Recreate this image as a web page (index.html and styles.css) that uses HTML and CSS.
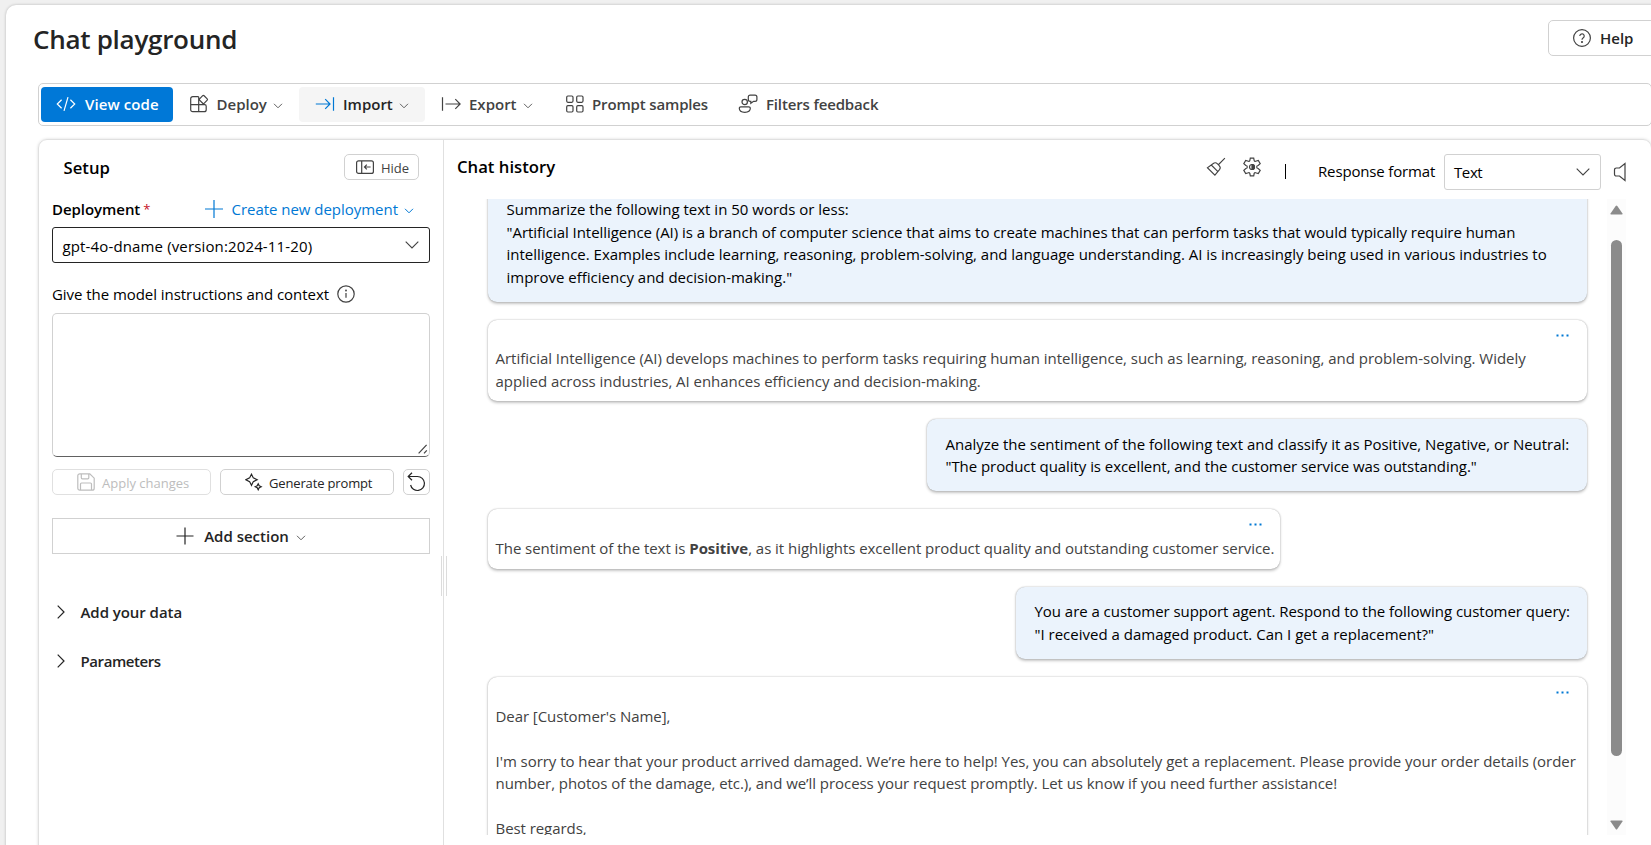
FILE: index.html
```
<!DOCTYPE html>
<html lang="en">
<head>
<meta charset="utf-8">
<title>Chat playground</title>
<link rel="stylesheet" href="styles.css">
</head>
<body>
<main class="shell">
  <header class="topbar">
    <h1 class="title"><span>Chat playground</span></h1>
    <button class="help">
      <svg class="ic" width="20" height="20" viewBox="0 0 20 20"><circle cx="10" cy="10" r="8.400"/><path d="M7.800 8a2.200 2.200 0 1 1 3.500 1.800c-.8.6-1.300 1-1.300 2"/><circle cx="10" cy="14" r=".5"/></svg>
      <span>Help</span>
    </button>
  </header>

  <nav class="toolbar">
    <button class="tool tool-primary">
      <svg class="ic" width="20" height="20" viewBox="0 0 20 20"><path d="M5.600 5.800L1.300 10l4.300 4.200M14.400 5.800l4.300 4.200-4.300 4.200M12 3.200L8 16.800"/></svg>
      <span>View code</span>
    </button>
    <button class="tool tool-deploy">
      <svg class="ic" width="20" height="20" viewBox="0 0 20 20"><path d="M9.700 2.700H3.700a2 2 0 0 0-2 2v11a2 2 0 0 0 2 2h11.500a2 2 0 0 0 2-2v-3.500a1.500 1.500 0 0 0-1.500-1.500H1.700M9.700 2.700v15M13.700 1.700a1 1 0 0 1 1.400 0l3.100 3.100a1 1 0 0 1 0 1.400l-3.100 3.100a1 1 0 0 1-1.400 0l-3.100-3.100a1 1 0 0 1 0-1.400z"/></svg>
      <span>Deploy</span>
      <svg class="chev" width="10" height="6" viewBox="0 0 10 6"><path d="M1 .8l4 4 4-4"/></svg>
    </button>
    <button class="tool tool-import">
      <svg class="ic blue" width="20" height="20" viewBox="0 0 20 20"><path d="M.8 10h14M10.200 5.200L15 10l-4.800 4.800M18.500 3.300v13.400"/></svg>
      <span>Import</span>
      <svg class="chev" width="10" height="6" viewBox="0 0 10 6"><path d="M1 .8l4 4 4-4"/></svg>
    </button>
    <button class="tool tool-export">
      <svg class="ic" width="20" height="20" viewBox="0 0 20 20"><path d="M4.500 10H19M14.300 5.200L19.100 10l-4.800 4.800M1.500 3.300v13.400"/></svg>
      <span>Export</span>
      <svg class="chev" width="10" height="6" viewBox="0 0 10 6"><path d="M1 .8l4 4 4-4"/></svg>
    </button>
    <button class="tool tool-prompt">
      <svg class="ic" width="20" height="20" viewBox="0 0 20 20"><rect x="1.700" y="2" width="6.300" height="6.300" rx="1.200"/><rect x="11.700" y="2" width="6.300" height="6.300" rx="1.200"/><rect x="1.700" y="11.700" width="6.300" height="6.300" rx="1.200"/><rect x="11.700" y="11.700" width="6.300" height="6.300" rx="1.200"/></svg>
      <span>Prompt samples</span>
    </button>
    <button class="tool tool-filters">
      <svg class="ic" width="20" height="20" viewBox="0 0 20 20"><circle cx="6.700" cy="8" r="2.700"/><path d="M2.800 12.800h8a1.500 1.500 0 0 1 1.500 1.500c0 2.500-2.500 4-5.500 4s-5.500-1.500-5.500-4a1.500 1.500 0 0 1 1.500-1.500zM12.200 1.200H17A1.900 1.900 0 0 1 18.900 3.100v2.300A1.900 1.900 0 0 1 17 7.300h-1.400l-2.800 2V7.300h-.6a1.900 1.900 0 0 1-1.900-1.900V3.100a1.900 1.900 0 0 1 1.900-1.900z"/></svg>
      <span>Filters feedback</span>
    </button>
  </nav>

  <div class="panels">
    <section class="setup">
      <div class="setup-head">
        <h2 class="h2"><span>Setup</span></h2>
        <button class="btn hide">
          <svg class="ic" width="20" height="16" viewBox="0 0 20 16"><rect x="1.600" y="1.800" width="16.800" height="12.600" rx="2"/><path d="M6.700 2v12.300M15.600 8H9.500M11.800 5.700L9.500 8l2.300 2.300"/></svg>
          <span>Hide</span>
        </button>
      </div>
      <div class="dep-row">
        <span class="dep-label">Deployment</span><span class="req">*</span>
        <a class="create">
          <svg class="plus" width="18" height="18" viewBox="0 0 18 18"><path d="M9 0v18M0 9h18"/></svg>
          <span>Create new deployment</span>
          <svg class="chev" width="10" height="6" viewBox="0 0 10 6"><path d="M1 .8l4 4 4-4"/></svg>
        </a>
      </div>
      <div class="select dep-select">
        <span>gpt-4o-dname (version:2024-11-20)</span>
        <svg class="caret" width="14" height="8" viewBox="0 0 14 8"><path d="M.7.700L7 7 13.300.700"/></svg>
      </div>
      <div class="inst-row">
        <span>Give the model instructions and context</span>
        <svg class="ic" width="18" height="18" viewBox="0 0 18 18"><circle cx="9" cy="9" r="8.200"/><path d="M9 8v4.700"/><circle cx="9" cy="5.500" r=".4"/></svg>
      </div>
      <div class="area">
        <svg class="resize" width="10" height="10" viewBox="0 0 10 10"><path d="M.6 9.400L8.600.8M6 9.400l2.800-3"/></svg>
      </div>
      <div class="btn-row">
        <button class="btn apply">
          <svg class="ic" width="18" height="18" viewBox="0 0 18 18"><path d="M2.800.8h10l4.400 4.400v10a2 2 0 0 1-2 2H2.800a2 2 0 0 1-2-2V2.800a2 2 0 0 1 2-2M4.300.8v4a1 1 0 0 0 1 1h5.500a1 1 0 0 0 1-1v-4M3.500 17v-6a1 1 0 0 1 1-1h9a1 1 0 0 1 1 1v6"/></svg>
          <span>Apply changes</span>
        </button>
        <button class="btn generate">
          <svg class="ic" width="18" height="18" viewBox="0 0 18 18"><path d="M6.500 1.200l1.800 3.700 3.800 1.800-3.800 1.900-1.800 3.700-1.900-3.700L.8 6.700l3.800-1.800zM13.200 10.800l1 2 2 1-2 1-1 2-1-2-2-1 2-1z"/></svg>
          <span>Generate prompt</span>
        </button>
        <button class="btn undo">
          <svg class="ic" width="20" height="20" viewBox="0 0 20 20"><path d="M5 .8L1.200 4.500 5 8.200M1.200 4.500h9.300a7 7 0 1 1-6.900 8.500"/></svg>
        </button>
      </div>
      <button class="add-section">
        <svg class="plus" width="18" height="18" viewBox="0 0 18 18"><path d="M9 .5v17M.5 9h17"/></svg>
        <span>Add section</span>
        <svg class="chev" width="10" height="6" viewBox="0 0 10 6"><path d="M1 .8l4 4 4-4"/></svg>
      </button>
      <div class="acc acc-data"><svg class="ic" width="8" height="14" viewBox="0 0 8 14"><path d="M.7.700L7 7 .7 13.300"/></svg><span>Add your data</span></div>
      <div class="acc acc-params"><svg class="ic" width="8" height="14" viewBox="0 0 8 14"><path d="M.7.700L7 7 .7 13.300"/></svg><span>Parameters</span></div>
      <div class="grip"></div>
    </section>

    <section class="chat">
      <div class="chat-head">
        <h2 class="h2 chat-title"><span>Chat history</span></h2>
        <svg class="ic brush" width="20" height="20" viewBox="0 0 20 20"><path d="M18.900 1.200l-6.300 6.300M7.300 6.500c1.400-1.100 3-.8 4.200.4l1.700 1.700c1.200 1.200 1.400 2.700.3 4.100l-4.600 5.500L1.400 10.700zM5.300 8l6.600 6.600"/></svg>
        <svg class="ic gear" width="20" height="20" viewBox="0 0 20 20"><path d="M8.300 1.200h3.400l.5 2.300a1 1 0 0 0 1.400.8l2.700-.9 1.900 3.200-2 1.900a1.200 1.200 0 0 0 0 3l2 1.900-1.900 3.200-2.700-.9a1 1 0 0 0-1.400.8l-.5 2.300H8.300l-.5-2.300a1 1 0 0 0-1.400-.8l-2.700.9-1.900-3.200 2-1.900a1.200 1.200 0 0 0 0-3l-2-1.900 1.900-3.200 2.700.9a1 1 0 0 0 1.400-.8z"/><circle cx="10" cy="10" r="2.500"/><path class="fill" d="M10 7.500a2.500 2.500 0 0 1 0 5z"/></svg>
        <i class="bar"></i>
        <span class="rf">Response format</span>
        <div class="select rf-select">
          <span>Text</span>
          <svg class="caret" width="14" height="8" viewBox="0 0 14 8"><path d="M.7.700L7 7 13.300.700"/></svg>
        </div>
        <svg class="ic speaker" width="14" height="20" viewBox="0 0 14 20"><path d="M12 1.500v17L6.500 14H3.300A1.800 1.800 0 0 1 1.500 12.200V7.800A1.800 1.800 0 0 1 3.300 6h3.200z"/></svg>
      </div>
      <div class="scroll">
        <div class="log">
          <div class="msg user first">
            <span>Summarize the following text in 50 words or less:</span>
            <span class="snug">"Artificial Intelligence (AI) is a branch of computer science that aims to create machines that can perform tasks that would typically require human</span>
            <span class="near">intelligence. Examples include learning, reasoning, problem-solving, and language understanding. AI is increasingly being used in various industries to</span>
            <span>improve efficiency and decision-making."</span>
          </div>
          <div class="msg bot summary">
            <svg class="dots" width="13" height="3" viewBox="0 0 13 3"><path d="M.5.500h2v2h-2zM5.500.500h2v2h-2zM10.500.500h2v2h-2z"/></svg>
            <span class="near">Artificial Intelligence (AI) develops machines to perform tasks requiring human intelligence, such as learning, reasoning, and problem-solving. Widely</span>
            <span class="snug">applied across industries, AI enhances efficiency and decision-making.</span>
          </div>
          <div class="msg user analyze">
            <span class="near">Analyze the sentiment of the following text and classify it as Positive, Negative, or Neutral:</span>
            <span class="tight">"The product quality is excellent, and the customer service was outstanding."</span>
          </div>
          <div class="msg bot sentiment">
            <svg class="dots" width="13" height="3" viewBox="0 0 13 3"><path d="M.5.500h2v2h-2zM5.500.500h2v2h-2zM10.500.500h2v2h-2z"/></svg>
            <span class="snug">The sentiment of the text is <b>Positive</b>, as it highlights excellent product quality and outstanding customer service.</span>
          </div>
          <div class="msg user support">
            <span class="snug">You are a customer support agent. Respond to the following customer query:</span>
            <span>"I received a damaged product. Can I get a replacement?"</span>
          </div>
          <div class="msg bot letter">
            <svg class="dots" width="13" height="3" viewBox="0 0 13 3"><path d="M.5.500h2v2h-2zM5.500.500h2v2h-2zM10.500.500h2v2h-2z"/></svg>
            <span class="para tight">Dear [Customer's Name],</span>
            <span class="snug">I'm sorry to hear that your product arrived damaged. We’re here to help! Yes, you can absolutely get a replacement. Please provide your order details (order</span>
            <span class="para tight">number, photos of the damage, etc.), and we’ll process your request promptly. Let us know if you need further assistance!</span>
            <span class="tight">Best regards,</span>
          </div>
        </div>
        <div class="sbar">
          <svg width="13" height="10" viewBox="0 0 13 10"><path d="M5.700 1a1 1 0 0 1 1.600 0L12.500 8.500a.7.700 0 0 1-.6 1H1.100a.7.700 0 0 1-.6-1z"/></svg>
          <div class="thumb"></div>
          <svg width="13" height="10" viewBox="0 0 13 10"><path d="M5.700 9a1 1 0 0 0 1.600 0L12.500 1.500a.7.700 0 0 0-.6-1H1.100a.7.700 0 0 0-.6 1z"/></svg>
        </div>
      </div>
    </section>
  </div>
</main>
</body>
</html>
```
FILE: styles.css
```
* { box-sizing: border-box; }
html, body { margin: 0; height: 100%; overflow: hidden; }
body {
  background: #f0f0f0;
  padding: 5px 0 0 6px;
  font-family: "Open Sans", "Noto Sans", sans-serif;
  font-size: 15px;
  color: #000;
}
button { font: inherit; color: inherit; background: #fff; margin: 0; padding: 0; border: 0; display: flex; align-items: center; }
span { white-space: nowrap; }
svg { flex: none; display: block; fill: none; stroke: #424242; stroke-width: 1.2; }
svg .fill { fill: #424242; }

.shell { width: 1670px; height: 860px; background: #fff; border-radius: 10px; box-shadow: 0 0 3px rgba(0,0,0,.25); }

.topbar { height: 78px; display: flex; padding: 15px 0 0 27px; }
.title { flex: none; margin: 0; padding-top: 1px; width: 1515px; font-size: 26px; line-height: 36px; font-weight: 600; letter-spacing: -.28px; color: #242424; }
.help { flex: none; width: 140px; height: 36px; border: 1px solid #d1d1d1; border-radius: 5px; padding-left: 23px; gap: 8px; font-weight: 600; color: #242424; }

.toolbar { height: 43px; margin-left: 32px; width: 1614px; border: 1px solid #d1d1d1; border-radius: 5px; display: flex; align-items: center; padding-left: 2px; }
.tool { height: 35px; border-radius: 4px; font-weight: 600; color: #424242; padding-bottom: 2px; }
.tool .ic { margin-right: 8px; }
.tool-primary { width: 132px; padding-left: 15px; background: #0078d7; color: #fff; letter-spacing: .1px; }
.tool-primary svg { stroke: #fff; }
.tool-primary .ic { margin-right: 9px; }
.tool-deploy { width: 126px; padding-left: 15.500px; }
.tool-import { width: 126px; padding-left: 16px; background: #f5f5f5; color: #242424; }
.tool-export { width: 125px; padding-left: 16px; }
.tool-prompt { width: 173px; padding-left: 15px; letter-spacing: -.15px; }
.tool-prompt .ic { margin-right: 7px; }
.tool-filters { width: 170px; padding-left: 15px; letter-spacing: -.15px; }
.blue { stroke: #0078d4; }
.chev { stroke: #616161; stroke-width: 1; margin-top: 4px; }
.tool .chev { margin-left: 6px; }

.panels { margin: 13px 0 0 32px; width: 1614px; height: 720px; border: 1px solid #e0e0e0; border-radius: 9px; box-shadow: 0 0 3px rgba(0,0,0,.15); display: flex; }
.setup { flex: none; width: 405px; border-right: 1px solid #e0e0e0; padding: 14px 13px 0 13px; position: relative; }
.setup-head { display: flex; justify-content: space-between; padding: 0 11px 0 11.500px; height: 27px; }
.h2 { margin: 0; font-size: 16.700px; line-height: 27px; font-weight: 600; }
.btn { height: 26px; border: 1px solid #d1d1d1; border-radius: 5px; font-size: 13px; color: #242424; }
.hide { width: 75px; padding-left: 10px; gap: 6px; color: #424242; }
.dep-row { display: flex; align-items: center; height: 28px; margin-top: 14px; }
.dep-label { font-weight: 600; font-size: 15px; letter-spacing: -.05px; }
.req { color: #c50f1f; font-size: 13px; margin-left: 3px; }
.create { margin-left: auto; margin-right: 16px; display: flex; align-items: center; color: #0078d4; }
.create svg { stroke: #0078d4; }
.create span { margin: 0 6px 0 9px; letter-spacing: -.03px; }
.select { border: 1px solid #242424; border-radius: 3px; height: 36px; display: flex; align-items: center; justify-content: space-between; padding: 2px 10px 0 10px; }
.caret { stroke: #424242; stroke-width: 1.1; margin-top: -3px; }
.dep-select { margin-top: 4px; letter-spacing: .14px; padding-left: 9.500px; }
.inst-row { display: flex; align-items: center; gap: 8px; height: 24px; margin-top: 19px; letter-spacing: -.05px; }
.area { margin-top: 7px; height: 144px; border: 1px solid #d1d1d1; border-bottom-color: #616161; border-radius: 5px; display: flex; align-items: flex-end; justify-content: flex-end; padding: 0 1px 2px; }
.btn-row { display: flex; margin-top: 12px; gap: 9px; }
.apply { width: 159px; border-color: #e0e0e0; color: #bdbdbd; padding-left: 24px; gap: 7px; }
.apply svg { stroke: #bdbdbd; }
.btn span { padding-top: 1px; }
.generate { width: 174px; padding-left: 24px; gap: 6px; letter-spacing: -.15px; }
.generate svg, .undo svg, .acc svg { stroke: #242424; }
.undo { width: 27px; padding-left: 3px; }
.add-section { margin-top: 23px; width: 378px; height: 36px; border: 1px solid #d1d1d1; justify-content: center; font-weight: 600; color: #242424; }
.add-section .plus { stroke: #242424; }
.add-section span { margin: 0 7px 0 10px; }
.acc { display: flex; align-items: center; height: 24px; gap: 15.500px; padding-left: 5px; font-weight: 600; color: #242424; letter-spacing: -.05px; }
.acc-data { margin-top: 46px; }
.acc-params { margin-top: 25px; letter-spacing: -.42px; }
.grip { position: absolute; right: -4px; top: 416px; width: 6px; height: 40px; border: solid #dcdcdc; border-width: 0 1px; }

.chat { flex: 1; padding-top: 14px; }
.chat-head { display: flex; height: 45px; padding-left: 13px; }
.chat-title { width: 749px; line-height: 25px; }
.brush { margin-top: 3px; stroke-width: 1.1; }
.gear { margin: 3px 0 0 16px; }
.bar { width: 1px; height: 15px; background: #000; margin: 10px 32px 0 23px; }
.rf { width: 126px; line-height: 34px; letter-spacing: -.15px; }
.rf-select { width: 157px; border-color: #d1d1d1; padding-top: 0; padding-left: 9px; letter-spacing: -.4px; }
.rf-select .caret { margin-top: -1px; }
.speaker { margin: 8px 0 0 12px; }
.scroll { display: flex; height: 636px; overflow: hidden; }
.log { flex: none; width: 1163px; padding: 0 20px 0 44px; display: flex; flex-direction: column; align-items: flex-end; gap: 18px; height: 636px; overflow: hidden; }
.msg { flex: none; width: 1099px; border-radius: 9px; box-shadow: 0 0 1.500px rgba(0,0,0,.3), 0 1.500px 3px rgba(0,0,0,.22); display: flex; flex-direction: column; line-height: 22.500px; }
.user { background: #ebf3fc; padding: 13.500px 18px 13.500px 18.500px; }
.bot { background: #fff; color: #424242; padding: 28px 8px 8px 7.500px; position: relative; }
.first { margin-top: -15px; padding-top: 14px; padding-bottom: 14px; }
.summary { padding: 27px 8px 9px 7.500px; }
.analyze { width: 660px; }
.sentiment { width: 792px; align-self: flex-start; padding-bottom: 9px; }
.support { width: 571px; }
.near { letter-spacing: -.018px; }
.snug { letter-spacing: -.042px; }
.tight { letter-spacing: -.062px; }
.dots { position: absolute; right: 18px; top: 14px; fill: #0078d4; stroke: none; }
.para { margin-bottom: 22.500px; }
.sbar { width: 19px; background: #fcfcfc; display: flex; flex-direction: column; align-items: center; justify-content: space-between; padding: 6px 0 5px; }
.sbar svg { fill: #8b8b8b; stroke: none; }
.thumb { width: 11px; height: 516px; border-radius: 6px; background: #8b8b8b; margin-bottom: 39px; }
```
